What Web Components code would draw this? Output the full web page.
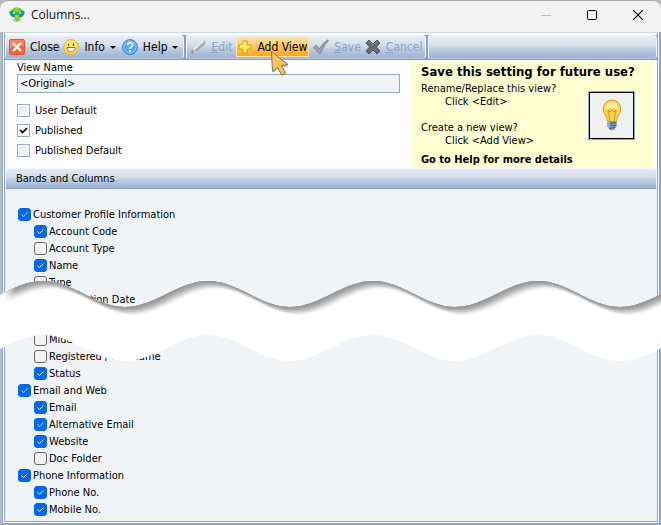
<!DOCTYPE html>
<html lang="en">
<head>
<meta charset="utf-8">
<title>Columns...</title>
<style>
html, body { height: 100%; margin: 0; }
body { background: #b9bcc0; font: 11px/13px "DejaVu Sans Condensed", "DejaVu Sans", sans-serif; color: #000; overflow: hidden; }
</style>
</head>
<body>
<dialog-window caption="Columns...">
  <tool-bar slot="toolbar">
    <tool-group>
      <tool-button icon="close">Close</tool-button>
      <tool-button icon="smile" menu>Info</tool-button>
      <tool-button icon="help" menu>Help</tool-button>
    </tool-group>
    <tool-group>
      <tool-button icon="pencil" disabled><u>E</u>dit</tool-button>
      <tool-button icon="plus" active>Add View</tool-button>
      <tool-button icon="check" disabled><u>S</u>ave</tool-button>
      <tool-button icon="cross" disabled><u>C</u>ancel</tool-button>
    </tool-group>
    <tool-group fill></tool-group>
  </tool-bar>
  <view-form></view-form>
  <save-hint></save-hint>
  <column-tree slot="tree"></column-tree>
  <torn-edge slot="overlay"></torn-edge>
</dialog-window>

<script>
const define = (name, html, setup) => customElements.define(name, class extends HTMLElement {
  constructor() {
    super();
    this.attachShadow({ mode: "open" });
  }
  connectedCallback() {
    this.shadowRoot.innerHTML = html;
    if (setup) setup(this, this.shadowRoot);
  }
});

const icons = {
  app: `<svg width="16" height="16" viewBox="0 0 16 16"><ellipse cx="8" cy="5.500" rx="7.800" ry="3.200" fill="#1a9fa8"/><ellipse cx="8" cy="4" rx="5" ry="3.600" fill="#42b629"/><path d="M4 4q1-3 4-3t4 3q-4 2-8 0" fill="#8bd92e"/><path d="M.500 6q7.500 4 15 0-1 4-5 4.500v1.500L8 14l-2-2v-1.500Q1.500 10 .500 6" fill="#16917a"/><path d="M6 8h4v3q-2 3-4 0z" fill="#a3dc23"/><circle cx="5" cy="6" r="1" fill="#d6f37a"/><circle cx="11" cy="6" r="1" fill="#d6f37a"/><ellipse cx="8" cy="13.500" rx="4" ry="1.200" fill="#72cf35" opacity=".7"/></svg>`,
  close: `<svg width="16" height="16" viewBox="0 0 16 16"><rect x=".5" y=".5" width="15" height="15" rx="1.500" fill="#f5683f" stroke="#ee4c2a"/><path d="M1 1h14v6Q8 6 1 9z" fill="#ff9b72" opacity=".55"/><path d="M4 4l8 8M12 4l-8 8" stroke="#fff" stroke-width="2.400"/></svg>`,
  smile: `<svg width="16" height="16" viewBox="0 0 16 16"><circle cx="8" cy="8" r="7.400" fill="#ffe14d" stroke="#f2b40f"/><ellipse cx="8" cy="5" rx="5" ry="3.500" fill="#fff3a0" opacity=".7"/><path d="M5.500 4.500v2.500M10.500 4.500v2.500" stroke="#7b5313" stroke-width="1.300"/><path d="M4 8.500h8q0 4.500-4 4.500T4 8.500z" fill="#fff" stroke="#a36b13"/></svg>`,
  help: `<svg width="16" height="16" viewBox="0 0 16 16"><circle cx="8" cy="8" r="7.400" fill="#58a5ee" stroke="#2f7dd4"/><circle cx="8" cy="8" r="6.200" fill="none" stroke="#a5d2fa" stroke-width=".8"/><path d="M5.700 6.200q0-2.500 2.400-2.500t2.400 2.200q0 1.300-1.300 2T8 10" fill="none" stroke="#fff" stroke-width="1.500"/><circle cx="8" cy="12.200" r="1" fill="#fff"/></svg>`,
  pencil: `<svg width="16" height="16" viewBox="0 0 16 16"><path d="M1 14l2-5 8-7q2-2 4-1t0 5l-8 6z" fill="#c9c9c9"/><path d="M3 9.500L12 1.500q1.500-.500 2 0L4.500 11z" fill="#f2f2f2"/><path d="M6 12.500l8-6.500 1-3-10 8z" fill="#a0a0a0"/><path d="M1 14l1-3 2 2z" fill="#777"/><path d="M1 15h6" stroke="#9da3ad" opacity=".7"/></svg>`,
  plus: `<svg width="14" height="14" viewBox="0 0 14 14"><path d="M5 1h4v4h4v4H9v4H5V9H1V5h4z" fill="#ffef3f" stroke="#b5a52b" stroke-linejoin="round"/><path d="M6 2v4H2" fill="none" stroke="#fffbb4"/></svg>`,
  check: `<svg width="16" height="16" viewBox="0 0 16 16"><path d="M.800 8.500l2.500-2 3 3.500Q9.500 4 15 .800l.500.700Q10.500 6.500 7 15z" fill="#a2a4a8" stroke="#777b82" stroke-width=".9" stroke-linejoin="round"/></svg>`,
  cross: `<svg width="16" height="16" viewBox="0 0 16 16"><path d="M4 1l4 4 4-4 3 3-3.700 4L15 12l-3 3-4-4-4 4-3-3 3.700-4L1 4z" fill="#686b70" stroke="#4e5156" stroke-linejoin="round"/><path d="M4 2l4 4 4-4" fill="none" stroke="#909398"/></svg>`,
  bulb: `<svg width="20" height="32" viewBox="0 0 20 32"><path d="M10 1a8.800 8.800 0 0 0-8.800 9c0 5 4 6.500 4.300 12.500h9c.300-6 4.300-7.500 4.300-12.500A8.800 8.800 0 0 0 10 1z" fill="#fdd04b" stroke="#dd9b2d"/><path d="M10 3a7 7 0 0 0-6.500 8q6.500-4 13 0A7 7 0 0 0 10 3z" fill="#ffeaa0"/><path d="M8 22l-2-11 2 2 2-2 2 2 2-2-2 11" fill="none" stroke="#c98c25" stroke-width=".8"/><path d="M5.500 22.500h9v5L12 31H8l-2.500-3.500z" fill="#7f9bb5"/><path d="M5.500 24.500l9-1M5.500 27l9-1M7 29.500l6-1" stroke="#45617e"/><path d="M7 23v5" stroke="#cfdfed"/></svg>`
};

define("dialog-window", `
<style>
  :host { display: flex; flex-direction: column; position: relative; height: 100vh; overflow: hidden; box-sizing: border-box; }
  header { display: flex; align-items: center; height: 32px; box-sizing: border-box; padding-left: 9px; background: #f3f3f3; border-top: 1px solid #a9a9a9; border-radius: 8px 8px 0 0; }
  h1 { flex: 1; margin: 0 0 0 6px; font: 12px/16px "Open Sans", "Noto Sans", sans-serif; color: #111; }
  .sys { width: 46px; height: 28px; padding: 0; border: 0; background: none; display: grid; place-items: center; }
  .app { display: grid; }
  header { align-items: flex-start; }
  .app, h1 { margin-top: 6px; }
  .outer { flex: 1; min-height: 0; display: flex; margin-left: 2px; border: 1px solid #8ba5c6; border-width: 0 2px 2px 1px; background: #fff; padding: 0 1px 1px; }
  .frame { flex: 1; min-width: 0; display: flex; flex-direction: column; border: 1px solid #8aa6cd; border-top-color: #c9d6ea; padding-top: 2px; }
  .top { display: flex; justify-content: space-between; padding: 1px 4px 0 12px; }
  .tree { flex: 1; min-height: 0; display: flex; flex-direction: column; }
</style>
<header>
  <span class="app">${icons.app}</span><h1></h1>
  <button class="sys" aria-label="Minimize"><svg width="10" height="10"><path d="M0 5.500h10" stroke="#bdbdbd"/></svg></button>
  <button class="sys" aria-label="Maximize"><svg width="10" height="10"><rect x=".5" y=".5" width="9" height="9" rx="1" fill="none" stroke="#000"/></svg></button>
  <button class="sys" aria-label="Close window"><svg width="10" height="10"><path d="M0 0l10 10M10 0L0 10" stroke="#000" stroke-width="1.100"/></svg></button>
</header>
<div class="outer"><div class="frame">
  <slot name="toolbar"></slot>
  <div class="top"><slot></slot></div>
  <div class="tree"><slot name="tree"></slot></div>
</div></div>
<slot name="overlay"></slot>`,
(host, root) => { root.querySelector("h1").textContent = host.getAttribute("caption"); });

define("tool-bar", `
<style>
  :host { display: flex; gap: 2px; height: 25px; box-sizing: border-box; background: #86a0c8; border-bottom: 1px solid #7f9bc6; }
</style><slot></slot>`);

define("tool-group", `
<style>
  :host { display: flex; align-items: center; gap: 4px; padding: 0 3px; box-sizing: border-box; border: 1px solid #f4f7fb; border-bottom-color: #b9c9e0; border-radius: 2px 4px 4px 2px; background: linear-gradient(#e9eef6, #d2dcea 45%, #bccbe1 60%, #9cb3d3); }
  :host([fill]) { flex: 1; }
</style><slot></slot>`);

define("tool-button", `
<style>
  :host { display: block; position: relative; }
  button { display: flex; align-items: center; gap: 5px; height: 20px; padding: 0; border: 0; background: none; color: #000; font: 12px/16px "DejaVu Sans Condensed", "DejaVu Sans", sans-serif; white-space: nowrap; }
  button:disabled { color: #86a1cd; }
  .icon { display: grid; }
  .arrow { display: none; border: 3px solid transparent; border-top-color: #000; border-bottom: 0; margin: 0 2px 0 0; }
  :host([menu]) .arrow { display: block; }
  :host([active]) button { border: 1px solid #ffe6b0; padding: 0 1px; background: linear-gradient(#ffe1a0, #ffc865 45%, #ffa619); }
  .cursor { position: absolute; left: 34px; top: 13px; z-index: 5; pointer-events: none; }
</style>
<button><span class="icon"></span><span><slot></slot></span><span class="arrow"></span></button>`,
(host, root) => {
  root.querySelector(".icon").innerHTML = icons[host.getAttribute("icon")];
  root.querySelector("button").disabled = host.hasAttribute("disabled");
  if (host.hasAttribute("active")) {
    root.innerHTML += `<svg class="cursor" width="22" height="28" viewBox="0 0 22 28"><path d="M3 3v20l5-4 4 7 4-2-4-7h7z" fill="#555" opacity=".35"/><path d="M1.500 1.500l1 20 5-4 4 7.500 4-2-4-7.500 6.500-1z" fill="#fbc15b" stroke="#8b744c" stroke-linejoin="round"/></svg>`;
  }
});

define("view-form", `
<style>
  :host { display: flex; flex-direction: column; flex: 0 1 383px; min-width: 0; padding-bottom: 8px; }
  .name { line-height: 13px; }
  input[type=text] { box-sizing: border-box; width: 100%; height: 19px; padding: 0 2px; border: 1px solid #8fa9ce; border-radius: 0; background: #f0f4f7; font: inherit; color: #000; outline: 0; }
  .checks { display: flex; flex-direction: column; gap: 7px; padding-top: 11px; }
  .checks label { display: flex; align-items: center; gap: 5px; }
  input[type=checkbox] { appearance: none; box-sizing: border-box; width: 13px; height: 13px; margin: 0; border: 1px solid #8fa9ce; background: linear-gradient(135deg, #dfe6ee, #fbfcfd); box-shadow: inset 0 0 0 1px #fff; }
  input:checked { background: url("data:image/svg+xml,%3Csvg xmlns='http://www.w3.org/2000/svg' viewBox='0 0 11 11'%3E%3Cpath d='M2 5l2.500 2.500L9 3' fill='none' stroke='%23000' stroke-width='1.700'/%3E%3C/svg%3E") #fafbfc; }
</style>
<label class="name" for="name">View Name</label>
<input id="name" type="text" value="&lt;Original&gt;">
<div class="checks">
  <label><input type="checkbox">User Default</label>
  <label><input type="checkbox" checked>Published</label>
  <label><input type="checkbox">Published Default</label>
</div>`);

define("save-hint", `
<style>
  :host { display: flex; align-items: center; justify-content: space-between; flex: 0 0 242px; box-sizing: border-box; padding: 3px 18px 2px 10px; background: #ffffd2; position: relative; }
  h2 { margin: 0 0 2px; font-size: 13px; line-height: 16px; white-space: nowrap; }
  dl { margin: 0 0 6px; }
  dd { margin: 0 0 0 24px; }
  dd + dt { margin-top: 13px; }
  .text { width: 160px; }
  strong { white-space: nowrap; }
  button { box-sizing: border-box; width: 47px; height: 49px; padding: 0; border: 1px solid #8fa9ce; box-shadow: inset 0 0 0 1px #000; background: #f0f0f0; display: grid; place-items: center; }
</style>
<div class="text">
  <h2>Save this setting for future use?</h2>
  <dl><dt>Rename/Replace this view?</dt><dd>Click &lt;Edit&gt;</dd><dt>Create a new view?</dt><dd>Click &lt;Add View&gt;</dd></dl>
  <strong>Go to Help for more details</strong>
</div>
<button aria-label="Tip">${icons.bulb}</button>`);

const item = ([label, on]) => `<label><input type="checkbox"${on ? " checked" : ""}>${label}</label>`;
const branch = ([head, items]) => `<li>${item([head, 1])}<ul>${items.map(i => `<li${i[2] ? ' class="resume"' : ""}>${item(i)}</li>`).join("")}</ul></li>`;
const bands = [
  ["Customer Profile Information", [["Account Code", 1], ["Account Type", 0], ["Name", 1], ["Type", 0], ["Registration Date", 0], ["Middle Name", 0, 1], ["Registered / Full Name", 0], ["Status", 1]]],
  ["Email and Web", [["Email", 1], ["Alternative Email", 1], ["Website", 1], ["Doc Folder", 0]]],
  ["Phone Information", [["Phone No.", 1], ["Mobile No.", 1]]]
];

define("column-tree", `
<style>
  :host { display: flex; flex-direction: column; flex: 1; min-height: 0; background: #f0f4f7; }
  h2 { margin: 0; padding: 0 10px; font-size: 11px; font-weight: normal; line-height: 19px; border: 1px solid #f4f7fb; border-bottom: 1px solid #86a0c8; border-radius: 4px 4px 0 0; background: linear-gradient(#e6ecf5, #d2dcea 40%, #bccbe1 60%, #9cb3d3); }
  ul { list-style: none; margin: 0; padding: 0 0 0 16px; }
  .root { padding: 17px 0 0 13px; }
  label { display: flex; align-items: center; gap: 2px; height: 17px; }
  .resume { margin-top: 23px; }
  input { appearance: none; box-sizing: border-box; width: 13px; height: 13px; margin: 0; border: 1px solid #666; border-radius: 3px; background: #f4f4f4; }
  input:checked { border-color: #0067f0; background: url("data:image/svg+xml,%3Csvg xmlns='http://www.w3.org/2000/svg' viewBox='0 0 11 11'%3E%3Cpath d='M2.500 5.500l2 2L8.500 3.500' fill='none' stroke='%23fff' stroke-width='.9'/%3E%3C/svg%3E") #0067f0; }
</style>
<h2>Bands and Columns</h2>
<ul class="root">${bands.map(branch).join("")}</ul>`);

// Crests and troughs alternate; one full period is 165px.
const wave = (dx, dy) => {
  let x = dx - 40, up = true;
  const hi = 1 + dy, lo = 27 + dy;
  let d = `M${x} ${lo}`;
  while (x < 4000) {
    const a = up ? lo : hi, b = up ? hi : lo, step = up ? 83 : 82;
    d += `C${x + 30} ${a} ${x + step - 30} ${b} ${x + step} ${b}`;
    x += step;
    up = !up;
  }
  return d;
};
const above = (dx, dy) => `${wave(dx, dy)}V-60H${dx - 40}Z`;
const below = (dx, dy) => `${wave(dx, dy)}V120H${dx - 40}Z`;
const greys = ["#989898", "#a0a0a0", "#ababab", "#b9b9b9", "#c8c8c8", "#d8d8d8", "#e8e8e8", "#f6f6f6"];

define("torn-edge", `
<style>
  :host { display: block; position: absolute; left: 0; right: 0; top: 280px; height: 82px; overflow: hidden; pointer-events: none; }
  svg { display: block; width: 100%; height: 82px; }
</style>
<svg aria-hidden="true">
  <defs>
    <clipPath id="t"><path d="${below(0, 0)}"/></clipPath>
    <clipPath id="b"><path d="${above(0, 54)}"/></clipPath>
    <linearGradient id="f" gradientUnits="userSpaceOnUse" x1="4" x2="16" y1="0" y2="0"><stop stop-color="#fff"/><stop offset="1" stop-color="#fff" stop-opacity="0"/></linearGradient>
  </defs>
  <g clip-path="url(#t)"><g clip-path="url(#b)">
    <rect width="100%" height="90" fill="#fff"/>
    ${greys.map((c, i) => `<path d="${above(i + 1, i + 1)}" fill="${c}"/>`).reverse().join("")}
    <rect width="16" height="40" fill="url(#f)"/>
  </g></g>
</svg>`);
</script>
</body>
</html>
